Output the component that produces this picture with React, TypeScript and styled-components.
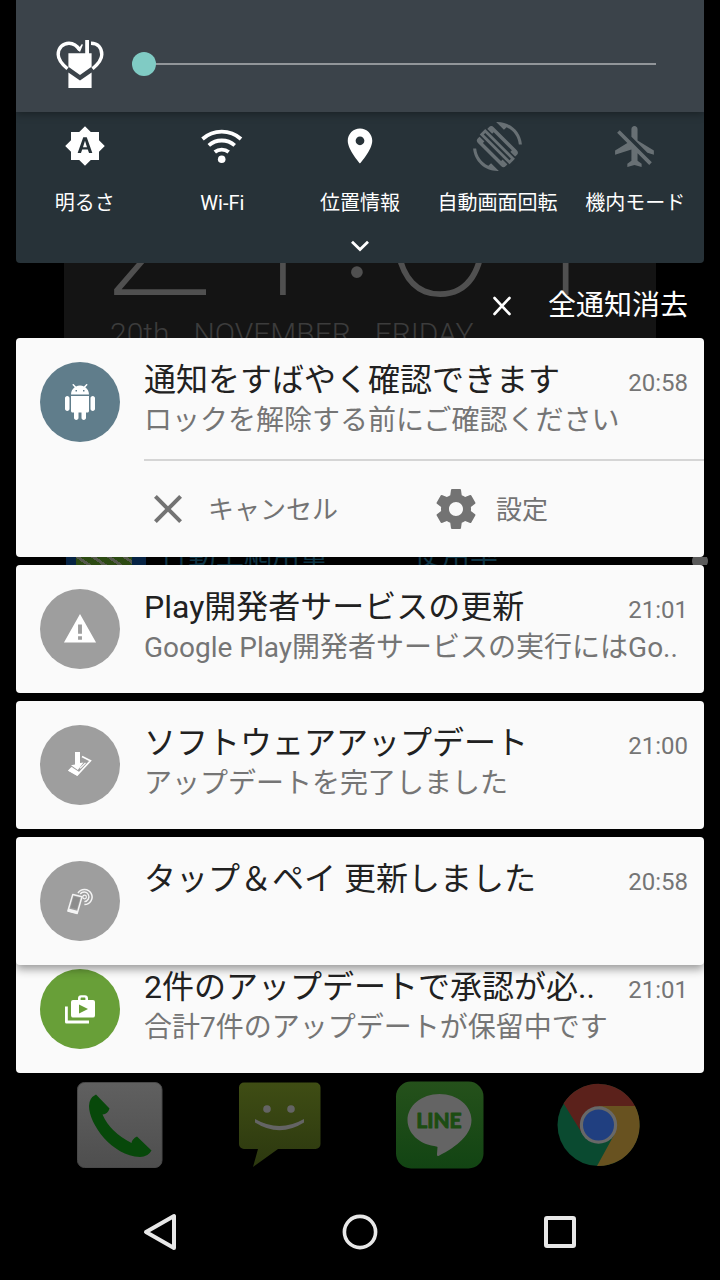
import React, { useState } from "react";
import styled, { createGlobalStyle, css } from "styled-components";

const GlobalStyle = createGlobalStyle`
  *, *::before, *::after { box-sizing: border-box; }
  html, body { margin: 0; background: #000; }
  body, button { font-family: Roboto, "Noto Sans CJK JP", sans-serif; }
  button {
    margin: 0;
    padding: 0;
    border: 0;
    background: none;
    color: inherit;
    cursor: pointer;
  }
  h2, p { margin: 0; font-weight: 400; }
  svg { display: block; flex: none; }
`;

const Screen = styled.div`
  display: flex;
  flex-direction: column;
  min-height: 100vh;
  background: #000;
  overflow: hidden;
`;

const Shade = styled.main`
  display: flex;
  flex-direction: column;
  padding: 0 16px;
`;

/* ---------- brightness header ---------- */

const Header = styled.header`
  position: relative;
  z-index: 1;
  display: flex;
  align-items: center;
  gap: 28px;
  height: 112px;
  padding: 16px 48px 0 40px;
  background: #3b434a;
  box-shadow: 0 2px 8px rgba(0, 0, 0, 0.35);
`;

const Slider = styled.input`
  flex: 1;
  min-width: 0;
  height: 24px;
  margin: 0;
  appearance: none;
  background: linear-gradient(#92969a, #92969a) center / 100% 2px no-repeat;

  &::-webkit-slider-thumb {
    appearance: none;
    width: 24px;
    height: 24px;
    border-radius: 50%;
    background: #80cbc4;
  }
`;

/* ---------- quick settings ---------- */

const QuickPanel = styled.section`
  display: flex;
  flex-direction: column;
  background: #273238;
  border-radius: 0 0 4px 4px;
`;

const Tiles = styled.div`
  display: grid;
  grid-template-columns: repeat(5, 1fr);
  padding-top: 10px;
`;

const Tile = styled.button<{ $off?: boolean }>`
  display: flex;
  flex-direction: column;
  align-items: center;
  gap: 21px;
  color: #fff;
  font-size: 20px;
  line-height: 24px;
  white-space: nowrap;

  svg {
    color: ${(p) => (p.$off ? "#687074" : "#fff")};
  }
`;

const IconBox = styled.span`
  display: flex;
  align-items: center;
  justify-content: center;
  height: 48px;
`;

const Expand = styled.button`
  display: flex;
  align-items: center;
  justify-content: center;
  height: 48px;
  padding-top: 14px;
`;

/* ---------- wallpaper strip with the clear-all button ---------- */

const ClockStrip = styled.div`
  display: grid;
  height: 75px;
  overflow: hidden;

  & > * {
    grid-area: 1 / 1;
    min-height: 0;
  }
`;

const ClockWidget = styled.div`
  display: flex;
  flex-direction: column;
  justify-content: flex-end;
  height: 75px;
  margin: 0 48px;
  padding-left: 46px;
  background: #141414;
  overflow: hidden;
  white-space: nowrap;
`;

const ClockTime = styled.div`
  display: flex;
  align-items: center;
  gap: 4px;
  flex: none;
  margin: 0 0 -8px -12px;
  color: #505050;
  font-size: 216px;
  font-weight: 100;
  line-height: 172px;
`;

const ClockColon = styled.span`
  margin-bottom: 36px;
`;

const ClockDate = styled.div`
  display: flex;
  gap: 24px;
  flex: none;
  margin-bottom: -12px;
  color: #3c3c3c;
  font-size: 30px;
  font-weight: 300;
  line-height: 32px;
`;

const ClearAll = styled.button`
  display: flex;
  align-items: center;
  align-self: center;
  justify-self: end;
  gap: 36px;
  padding: 10px 16px 0;
  z-index: 1;
  color: #fff;
  font-size: 28px;
  line-height: 32px;
`;

/* ---------- notifications ---------- */

const Card = styled.article<{ $raised?: boolean; $tucked?: boolean }>`
  min-height: 128px;
  background: #fafafa;
  border-radius: 4px;

  & + & {
    margin-top: 8px;
  }

  ${(p) =>
    p.$raised &&
    css`
      position: relative;
      z-index: 1;
      box-shadow: 0 4px 10px rgba(0, 0, 0, 0.4);
    `}

  ${(p) =>
    p.$tucked &&
    css`
      && {
        margin-top: -20px;
      }
    `}
`;

const CardMain = styled.div`
  display: flex;
  align-items: flex-start;
  gap: 24px;
  height: 121px;
  padding: 0 16px 0 24px;
`;

const Badge = styled.div<{ $color: string }>`
  display: flex;
  flex: none;
  align-items: center;
  justify-content: center;
  width: 80px;
  height: 80px;
  margin-top: 24px;
  border-radius: 50%;
  background: ${(p) => p.$color};
  color: #fff;
`;

const CardText = styled.div`
  flex: 1;
  min-width: 0;
  padding-top: 22px;
`;

const TitleRow = styled.div`
  display: flex;
  align-items: center;
  justify-content: space-between;
`;

const Title = styled.h2`
  color: #212121;
  font-size: 32px;
  line-height: 40px;
  white-space: nowrap;
`;

const Time = styled.time`
  padding-top: 6px;
  color: #757575;
  font-size: 24px;
  line-height: 32px;
`;

const Message = styled.p`
  color: #757575;
  font-size: 28px;
  line-height: 42px;
  white-space: nowrap;
`;

const Actions = styled.div`
  display: grid;
  grid-template-columns: 1fr 1fr;
  gap: 16px;
  height: 98px;
  margin-left: 128px;
  border-top: 2px solid #d5d5d5;
`;

const Action = styled.button`
  display: flex;
  align-items: center;
  gap: 16px;
  color: #737373;
  font-size: 26px;
`;

const ActionLabel = styled.span`
  padding-bottom: 4px;
`;

/* ---------- widget row that shows between two cards ---------- */

const WidgetGap = styled.div`
  display: flex;
  align-items: center;
  height: 8px;
  margin: 0 -4px 0 0;
  padding-left: 50px;
  overflow: hidden;
  color: #0f3546;
  font-size: 28px;
  line-height: 36px;
  white-space: nowrap;
`;

const WidgetThumb = styled.span`
  width: 80px;
  height: 8px;
  margin-right: 14px;
  border: solid #062344;
  border-width: 0 14px 0 10px;
  background: repeating-linear-gradient(35deg, #2c4a12 0 6px, #55584c 6px 9px);
  background-clip: padding-box;
`;

const WidgetLabel = styled.span`
  width: 254px;
  padding-bottom: 10px;
`;

const ScrollDot = styled.span`
  width: 16px;
  height: 16px;
  margin-left: auto;
  border-radius: 50%;
  background: #5a5a5a;
`;

/* ---------- dock and navigation ---------- */

const Dock = styled.footer`
  display: grid;
  grid-template-columns: repeat(4, 1fr);
  justify-items: center;
  padding: 7px 40px 8px;
`;

const NavBar = styled.nav`
  display: grid;
  grid-template-columns: repeat(3, 1fr);
  justify-items: center;
  padding: 24px 60px;
  color: #e8e8e8;
`;

type IconProps = { size: number; d: string };

const Icon = ({ size, d }: IconProps) => (
  <svg width={size} height={size} viewBox="0 0 24 24" fill="currentColor" fillRule="evenodd" aria-hidden="true">
    <path d={d} />
  </svg>
);

const paths = {
  brightness:
    "M10.85 12.65h2.3L12 9l-1.15 3.65zM20 8.69V4h-4.69L12 .69 8.69 4H4v4.69L.69 12 4 15.31V20h4.69L12 23.31 15.31 20H20v-4.69L23.31 12 20 8.69zM14.3 16l-.7-2h-3.2l-.7 2H7.8L11 7h2l3.2 9h-1.9z",
  place:
    "M12 2C8.13 2 5 5.13 5 9c0 5.25 7 13 7 13s7-7.75 7-13c0-3.87-3.13-7-7-7zm0 9.5c-1.38 0-2.5-1.12-2.5-2.5s1.12-2.5 2.5-2.5 2.5 1.12 2.5 2.5-1.12 2.5-2.5 2.5z",
  airplaneOff:
    "M13 9V3.5c0-.83-.67-1.5-1.5-1.5S10 2.67 10 3.5v3.68l7.83 7.83L21 16v-2l-8-5zM3 5.27l4.99 4.99L2 14v2l8-2.5V19l-2 1.5V22l3.5-1 3.5 1v-1.5L13 19v-3.73L18.73 21 20 19.73 4.27 4 3 5.27z",
  android:
    "M6 18c0 .55.45 1 1 1h1v3.5c0 .83.67 1.5 1.5 1.5s1.5-.67 1.5-1.5V19h2v3.5c0 .83.67 1.5 1.5 1.5s1.5-.67 1.5-1.5V19h1c.55 0 1-.45 1-1V8H6v10zM3.5 8C2.67 8 2 8.67 2 9.5v7c0 .83.67 1.5 1.5 1.5S5 17.33 5 16.5v-7C5 8.67 4.33 8 3.5 8zm17 0c-.83 0-1.5.67-1.5 1.5v7c0 .83.67 1.5 1.5 1.5s1.5-.67 1.5-1.5v-7c0-.83-.67-1.5-1.5-1.5zm-4.97-5.84l1.3-1.3c.2-.2.2-.51 0-.71-.2-.2-.51-.2-.71 0l-1.48 1.48C13.85 1.23 12.95 1 12 1c-.96 0-1.86.23-2.66.63L7.85.15c-.2-.2-.51-.2-.71 0-.2.2-.2.51 0 .71l1.31 1.31C6.97 3.26 6 5.01 6 7h12c0-1.99-.97-3.75-2.47-4.84zM10 5H9V4h1v1zm5 0h-1V4h1v1z",
  warning: "M1.3 21h21.4L12 2 1.3 21zm12-1.8h-2.6v-2.4h2.6v2.4zm0-4h-2.6V9h2.6v6.2z",
  close:
    "M19 6.41L17.59 5 12 10.59 6.41 5 5 6.41 10.59 12 5 17.59 6.41 19 12 13.41 17.59 19 19 17.59 13.41 12z",
  settings:
    "M19.43 12.98c.04-.32.07-.64.07-.98s-.03-.66-.07-.98l2.11-1.65c.19-.15.24-.42.12-.64l-2-3.46c-.12-.22-.39-.3-.61-.22l-2.49 1c-.52-.4-1.08-.73-1.69-.98l-.38-2.65C14.46 2.18 14.25 2 14 2h-4c-.25 0-.46.18-.49.42l-.38 2.65c-.61.25-1.17.59-1.69.98l-2.49-1c-.23-.09-.49 0-.61.22l-2 3.46c-.13.22-.07.49.12.64l2.11 1.65c-.04.32-.07.65-.07.98s.03.66.07.98l-2.11 1.65c-.19.15-.24.42-.12.64l2 3.46c.12.22.39.3.61.22l2.49-1c.52.4 1.08.73 1.69.98l.38 2.65c.03.24.24.42.49.42h4c.25 0 .46-.18.49-.42l.38-2.65c.61-.25 1.17-.59 1.69-.98l2.49 1c.23.09.49 0 .61-.22l2-3.46c.12-.22.07-.49-.12-.64l-2.11-1.65zM12 15.5c-1.93 0-3.5-1.57-3.5-3.5s1.57-3.5 3.5-3.5 3.5 1.57 3.5 3.5-1.57 3.5-3.5 3.5z",
};

const HeartHandIcon = () => (
  <svg width="48" height="48" viewBox="0 0 48 48" fill="none" stroke="#fff" strokeWidth="3.4" aria-hidden="true">
    <path d="M11.5 28.8C4 22.5 2.2 19 2.2 14.5C2.2 7.5 7 3.2 13 3.2C18 3.2 21.3 6 23.8 10" />
    <path d="M35 3.2C42 3.2 45.8 8 45.8 14.5C45.8 19 44 22.5 36.5 28.8" />
    <path d="M20.5 8.5L24 12L27 4.5L25.6 4.2L23.5 7.5z" fill="#fff" stroke="none" />
    <path d="M12.4 13.2H29.2V0H33V13.2H35.6V26.8L24 35L12.4 26.8z" fill="#fff" stroke="none" />
    <path d="M12.4 32.4L24 40.6L35.6 32.4V48H12.4z" fill="#fff" stroke="none" />
  </svg>
);

const WifiIcon = () => (
  <svg width="48" height="48" viewBox="0 0 48 48" fill="none" stroke="currentColor" strokeWidth="3.8" aria-hidden="true">
    <path d="M4.5 17A29 29 0 0 1 43 17" />
    <path d="M10.8 23.4A19.5 19.5 0 0 1 36.7 23.4" />
    <path d="M16.8 30A11 11 0 0 1 30.7 30" />
    <circle cx="23.7" cy="37.3" r="3.8" fill="currentColor" stroke="none" />
  </svg>
);

const RotationIcon = () => (
  <svg width="49" height="49" viewBox="0 0 24 24" aria-hidden="true">
    <path
      fill="currentColor"
      d="M16.48 2.52c3.27 1.55 5.61 4.72 5.97 8.48h1.5C23.44 4.84 18.29 0 12 0l-.66.03 3.81 3.81 1.33-1.32zM7.52 21.48C4.25 19.94 1.91 16.76 1.55 13H.05C.56 19.16 5.71 24 12 24l.66-.03-3.81-3.81-1.33 1.32z"
    />
    <g transform="rotate(45 12 12)" fill="none" stroke="currentColor">
      <rect x="3.2" y="7.5" width="17.6" height="9.2" rx=".8" strokeWidth="1.7" />
      <path d="M4.2 8v8.500M19.800 8v8.500" strokeWidth="3" />
      <path d="M0 12.1H24" stroke="#273238" strokeWidth="5.4" />
      <path d="M2.4 10.9H21.6V13.3H2.4z" strokeWidth="1.4" />
    </g>
  </svg>
);

const ChevronIcon = () => (
  <svg width="20" height="12" viewBox="0 0 20 12" fill="none" stroke="#fff" strokeWidth="2.8" aria-hidden="true">
    <path d="M2 1.8L10 9.6L18 1.8" />
  </svg>
);

const ClearIcon = () => (
  <svg width="20" height="20" viewBox="0 0 20 20" fill="none" stroke="#fff" strokeWidth="2.6" strokeLinecap="round" aria-hidden="true">
    <path d="M2.5 2L17.5 18M17.5 2L2.5 18" />
  </svg>
);

const DownloadIcon = () => (
  <svg width="24" height="26" viewBox="0 0 24 26" fill="currentColor" aria-hidden="true">
    <path d="M14 4.5L22.4 8.8L9.2 23L1.2 18.5L4 15.5" fill="none" stroke="currentColor" strokeWidth="1.7" />
    <path d="M4 15.2L12 20.4L9.2 23.8L.6 18.8z" />
    <path d="M7 0h5v11l3.5-.6L9.8 18L3 13.2l4-.6z" />
    <path d="M12 16.4L17.5 10.8" fill="none" stroke="currentColor" strokeWidth="1.2" />
  </svg>
);

const TapPayIcon = () => (
  <svg width="28" height="28" viewBox="0 0 28 28" fill="none" stroke="#f4f4f4" aria-hidden="true">
    <path d="M12 6A7.6 7.6 0 1 1 18.4 17.6" strokeWidth="1.5" />
    <path d="M14.2 7A4.8 4.8 0 1 1 18.4 14.6" strokeWidth="1.4" />
    <circle cx="18.6" cy="10" r="1.8" strokeWidth="1.2" />
    <path d="M6.8 7.4L16 9.8L11.2 26.4L1.9 24z" fill="#9e9e9e" strokeWidth="1.5" strokeLinejoin="round" />
    <path d="M7.8 9.4L14 11L10.8 22L4.6 20.4z" fill="#8c8c8c" stroke="none" />
    <path d="M2.6 21.6L12.2 24L11.2 26.8L1.6 24.4z" fill="#f4f4f4" stroke="none" />
  </svg>
);

const StoreIcon = () => (
  <svg width="32" height="32" viewBox="0 0 32 32" fill="currentColor" fillRule="evenodd" aria-hidden="true">
    <path d="M9 7h5V5.2C14 3.4 15.2 2.2 17 2.2h4C22.8 2.2 24 3.4 24 5.2V7h5a2 2 0 0 1 2 2v13.5a2 2 0 0 1-2 2H9a2 2 0 0 1-2-2V9a2 2 0 0 1 2-2zM16.6 7h4.8V5.2a.7.7 0 0 0-.7-.7h-3.4a.7.7 0 0 0-.7.7zM15 11.5v9L24 16z" />
    <path d="M1 13.5h2.8V27.5H25v3H2.5A1.5 1.5 0 0 1 1 29z" />
  </svg>
);

const PhoneAppIcon = () => (
  <svg width="96" height="96" viewBox="0 0 96 96" aria-hidden="true">
    <defs>
      <linearGradient id="phoneTile" x1="0" y1="0" x2="0" y2="1">
        <stop offset="0" stopColor="#606060" />
        <stop offset="1" stopColor="#4e4e4e" />
      </linearGradient>
    </defs>
    <rect x="5.5" y="2.5" width="84.5" height="85" rx="7" fill="url(#phoneTile)" stroke="#484848" />
    <path
      d="M24 14.5L37.5 28.5Q36 34 30.5 34.5Q38 52 59.5 63Q60 59 65 56.5L79.5 70.5Q76 77 68 77C40 76 17 44 17 26Q17 18 24 14.5z"
      fill="#07480a"
    />
  </svg>
);

const MessageAppIcon = () => (
  <svg width="96" height="96" viewBox="0 0 96 96" aria-hidden="true">
    <defs>
      <linearGradient id="messageTile" x1="0" y1="0" x2="0" y2="1">
        <stop offset="0" stopColor="#3f4d14" />
        <stop offset="1" stopColor="#2c380f" />
      </linearGradient>
    </defs>
    <path
      d="M12 2.5H83.5A5 5 0 0 1 88.5 7.5V64A5 5 0 0 1 83.5 69H46L21 87L26 69H12A5 5 0 0 1 7 64V7.5A5 5 0 0 1 12 2.5z"
      fill="url(#messageTile)"
    />
    <circle cx="35" cy="29" r="3.8" fill="#646464" />
    <circle cx="59" cy="29" r="3.8" fill="#646464" />
    <path d="M23 39Q47.5 53 72 39V42.5Q47.5 58 23 42.5z" fill="#646464" />
  </svg>
);

const LineText = styled.text`
  fill: #1c4c12;
  stroke: #1c4c12;
  stroke-width: 1px;
  stroke-linejoin: round;
  font-family: Lato, Roboto, sans-serif;
  font-size: 21px;
  font-weight: 700;
  text-anchor: middle;
`;

const LineAppIcon = () => (
  <svg width="96" height="96" viewBox="0 0 96 96" role="img" aria-label="LINE">
    <defs>
      <linearGradient id="lineTile" x1="0" y1="0" x2="0" y2="1">
        <stop offset="0" stopColor="#25511b" />
        <stop offset="1" stopColor="#124413" />
      </linearGradient>
    </defs>
    <rect x="4" y="1.5" width="87.5" height="87" rx="15" fill="url(#lineTile)" />
    <path
      d="M47.5 14C65.5 14 79.5 26 79.5 40C79.5 54 66 66 46.5 76Q44.5 76.5 45 74L45.5 67Q45 66.5 42 66C27 64 15.5 53 15.5 40C15.5 26 29.5 14 47.5 14z"
      fill="#646464"
    />
    <LineText x="47" y="48">LINE</LineText>
  </svg>
);

const ChromeAppIcon = () => (
  <svg width="96" height="96" viewBox="0 0 96 96" aria-hidden="true">
    <circle cx="46.5" cy="45" r="41" fill="#0a4a30" />
    <path d="M11.6 23.5A41 41 0 0 1 83 26H46.5L30.5 54z" fill="#5b211b" />
    <path d="M83 26A41 41 0 0 1 45 86L62 55L46.5 26z" fill="#685220" />
    <circle cx="46.5" cy="45" r="18.7" fill="#686868" />
    <circle cx="46.5" cy="45" r="15.5" fill="#203f80" />
  </svg>
);

type NoticeProps = {
  color: string;
  icon: React.ReactNode;
  title: string;
  time: string;
  message?: string;
  raised?: boolean;
  tucked?: boolean;
  children?: React.ReactNode;
};

const Notice = ({ color, icon, title, time, message, raised, tucked, children }: NoticeProps) => (
  <Card $raised={raised} $tucked={tucked}>
    <CardMain>
      <Badge $color={color}>{icon}</Badge>
      <CardText>
        <TitleRow>
          <Title>{title}</Title>
          <Time>{time}</Time>
        </TitleRow>
        {message && <Message>{message}</Message>}
      </CardText>
    </CardMain>
    {children}
  </Card>
);

const tiles = [
  { label: "明るさ", icon: <Icon size={42} d={paths.brightness} /> },
  { label: "Wi-Fi", icon: <WifiIcon /> },
  { label: "位置情報", icon: <Icon size={42} d={paths.place} /> },
  { label: "自動画面回転", icon: <RotationIcon />, off: true },
  { label: "機内モード", icon: <Icon size={49} d={paths.airplaneOff} />, off: true },
];

export default function App() {
  const [brightness, setBrightness] = useState(0);

  return (
    <Screen>
      <GlobalStyle />
      <Shade>
        <Header>
          <HeartHandIcon />
          <Slider
            type="range"
            min={0}
            max={100}
            value={brightness}
            aria-label="明るさ"
            onChange={(e) => setBrightness(Number(e.target.value))}
          />
        </Header>

        <QuickPanel>
          <Tiles>
            {tiles.map((t) => (
              <Tile key={t.label} type="button" $off={t.off} aria-pressed={!t.off}>
                <IconBox>{t.icon}</IconBox>
                {t.label}
              </Tile>
            ))}
          </Tiles>
          <Expand type="button" aria-label="展開">
            <ChevronIcon />
          </Expand>
        </QuickPanel>

        <ClockStrip>
          <ClockWidget>
            <ClockTime>
              <span>21</span>
              <ClockColon>:</ClockColon>
              <span>01</span>
            </ClockTime>
            <ClockDate>
              <span>20th</span>
              <span>NOVEMBER</span>
              <span>FRIDAY</span>
            </ClockDate>
          </ClockWidget>
          <ClearAll type="button">
            <ClearIcon />
            全通知消去
          </ClearAll>
        </ClockStrip>

        <Notice
          color="#607d8b"
          icon={<Icon size={36} d={paths.android} />}
          title="通知をすばやく確認できます"
          time="20:58"
          message="ロックを解除する前にご確認ください"
        >
          <Actions>
            <Action type="button">
              <Icon size={48} d={paths.close} />
              <ActionLabel>キャンセル</ActionLabel>
            </Action>
            <Action type="button">
              <Icon size={48} d={paths.settings} />
              <ActionLabel>設定</ActionLabel>
            </Action>
          </Actions>
        </Notice>

        <WidgetGap>
          <WidgetThumb />
          <WidgetLabel>行動上網用量</WidgetLabel>
          <WidgetLabel>使用率</WidgetLabel>
          <ScrollDot />
        </WidgetGap>

        <Notice
          color="#9e9e9e"
          icon={<Icon size={36} d={paths.warning} />}
          title="Play開発者サービスの更新"
          time="21:01"
          message="Google Play開発者サービスの実行にはGo.."
        />
        <Notice
          color="#9e9e9e"
          icon={<DownloadIcon />}
          title="ソフトウェアアップデート"
          time="21:00"
          message="アップデートを完了しました"
        />
        <Notice
          color="#9e9e9e"
          icon={<TapPayIcon />}
          title="タップ＆ペイ 更新しました"
          time="20:58"
          raised
        />
        <Notice
          color="#689f38"
          icon={<StoreIcon />}
          title="2件のアップデートで承認が必.."
          time="21:01"
          message="合計7件のアップデートが保留中です"
          tucked
        />
      </Shade>

      <Dock>
        <button type="button" aria-label="電話">
          <PhoneAppIcon />
        </button>
        <button type="button" aria-label="メッセージ">
          <MessageAppIcon />
        </button>
        <button type="button">
          <LineAppIcon />
        </button>
        <button type="button" aria-label="Chrome">
          <ChromeAppIcon />
        </button>
      </Dock>

      <NavBar>
        <button type="button" aria-label="戻る">
          <svg width="48" height="48" viewBox="0 0 48 48" fill="none" stroke="currentColor" strokeWidth="4" strokeLinejoin="round">
            <path d="M38 8V40L10 24z" />
          </svg>
        </button>
        <button type="button" aria-label="ホーム">
          <svg width="48" height="48" viewBox="0 0 48 48" fill="none" stroke="currentColor" strokeWidth="3.6">
            <circle cx="24" cy="24" r="15.6" />
          </svg>
        </button>
        <button type="button" aria-label="最近のアプリ">
          <svg width="48" height="48" viewBox="0 0 48 48" fill="none" stroke="currentColor" strokeWidth="4">
            <rect x="10" y="10" width="28" height="28" rx="1" />
          </svg>
        </button>
      </NavBar>
    </Screen>
  );
}
